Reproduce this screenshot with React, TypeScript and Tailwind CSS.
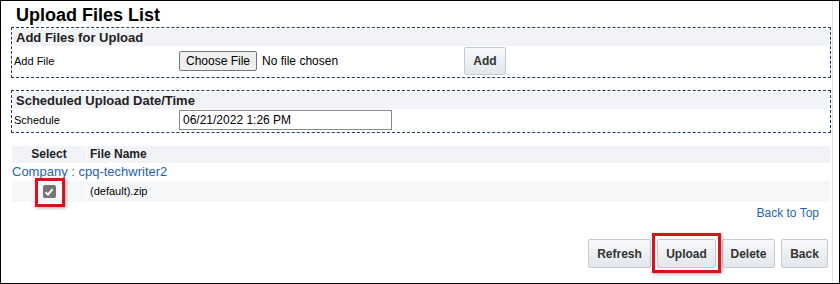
import React from "react";

const font = { fontFamily: '"Liberation Sans", Arial, sans-serif' };

const ActionButton = ({ label, width }: { label: string; width: string }) => (
    <button className={`${width} h-[29px] border border-[#c5cbd1] rounded-[2px] bg-gradient-to-b from-[#f7f8fa] to-[#e3e7eb] text-[12px] font-bold text-[#333]`}>
        {label}
    </button>
);

const SectionHeader = ({ title }: { title: string }) => (
    <div className="h-[17px] bg-[#f2f3f7] pl-[3px] text-[13px] font-bold leading-[17px] text-[#222]">{title}</div>
);

const App = () => {
    return (
        <div style={font} className="flex w-[840px] h-[284px] border border-black bg-white text-black overflow-hidden">
            <div className="w-[831px] pl-[10px] pr-[1px]">
                <h1 className="ml-[5px] pt-[4px] mb-[2px] text-[18px] font-bold leading-[20px]">Upload Files List</h1>

                {/* add files */}
                <div className="h-[51px] border border-dashed border-[#1d3b5e] px-[1px] pt-[1px]">
                    <SectionHeader title="Add Files for Upload" />
                    <div className="flex items-center h-[30px]">
                        <div className="w-[166px] text-[11px] pl-[1px]">Add File</div>
                        <div className="flex items-center w-[285px] text-[12px]">
                            <span className="h-[20px] px-[6px] border border-[#767676] rounded-[2px] bg-[#efefef] leading-[18px]">Choose File</span>
                            <span className="ml-[5px]">No file chosen</span>
                        </div>
                        <button className="h-[28px] w-[42px] border border-[#c5cbd1] rounded-[2px] bg-gradient-to-b from-[#f7f8fa] to-[#e3e7eb] text-[12px] font-bold text-[#333]">
                            Add
                        </button>
                    </div>
                </div>

                {/* schedule */}
                <div className="mt-[12px] h-[43px] border border-dashed border-[#1d3b5e] px-[1px] pt-[1px]">
                    <SectionHeader title="Scheduled Upload Date/Time" />
                    <div className="flex items-center h-[22px]">
                        <div className="w-[166px] text-[11px] pl-[1px]">Schedule</div>
                        <div className="w-[213px] h-[20px] border border-[#8a8a8a] pl-[3px] text-[12px] leading-[18px]">06/21/2022 1:26 PM</div>
                    </div>
                </div>

                {/* file table */}
                <div className="mt-[13px] ml-[1px] mr-[1px]">
                    <div className="flex h-[17px] bg-[#f2f3f7] text-[12px] font-bold leading-[17px] text-[#222]">
                        <div className="w-[74px] text-center">Select</div>
                        <div className="w-[1px] bg-white" />
                        <div className="pl-[3px]">File Name</div>
                    </div>
                    <div className="h-[18px] text-[13px] leading-[18px] text-[#1f64a8]">Company : cpq-techwriter2</div>
                    <div className="flex h-[21px] bg-[#f6f7f9] text-[11px] leading-[21px]">
                        <div className="w-[74px] flex items-center justify-center">
                            <div className="relative">
                                <div className="w-[13px] h-[13px] rounded-[2px] bg-[#757575] flex items-center justify-center">
                                    <svg width="10" height="10" viewBox="0 0 10 10">
                                        <path d="M1.5 5.2 L4 7.6 L8.6 2.2" fill="none" stroke="white" strokeWidth="1.9" />
                                    </svg>
                                </div>
                                <div className="absolute -left-[8px] -top-[7px] w-[30px] h-[29px] border-[3px] border-[#d3161d] shadow-[1px_1px_3px_rgba(0,0,0,0.35)]" />
                            </div>
                        </div>
                        <div className="w-[1px] bg-white" />
                        <div className="pl-[3px]">(default).zip</div>
                    </div>
                </div>

                <div className="flex justify-end pr-[12px] mt-[3px] text-[12px] leading-[16px] text-[#1f64a8]">Back to Top</div>

                <div className="flex justify-end gap-[6px] pr-[3px] mt-[18px]">
                    <ActionButton label="Refresh" width="w-[63px]" />
                    <div className="relative">
                        <ActionButton label="Upload" width="w-[59px]" />
                        <div className="absolute -left-[5px] -right-[5px] -top-[6px] -bottom-[5px] border-[3px] border-[#d3161d] shadow-[1px_1px_3px_rgba(0,0,0,0.35)]" />
                    </div>
                    <ActionButton label="Delete" width="w-[53px]" />
                    <ActionButton label="Back" width="w-[47px]" />
                </div>
            </div>
            <div className="w-[1px] bg-[#e6e6e6]" />
        </div>
    );
};

export default App;
